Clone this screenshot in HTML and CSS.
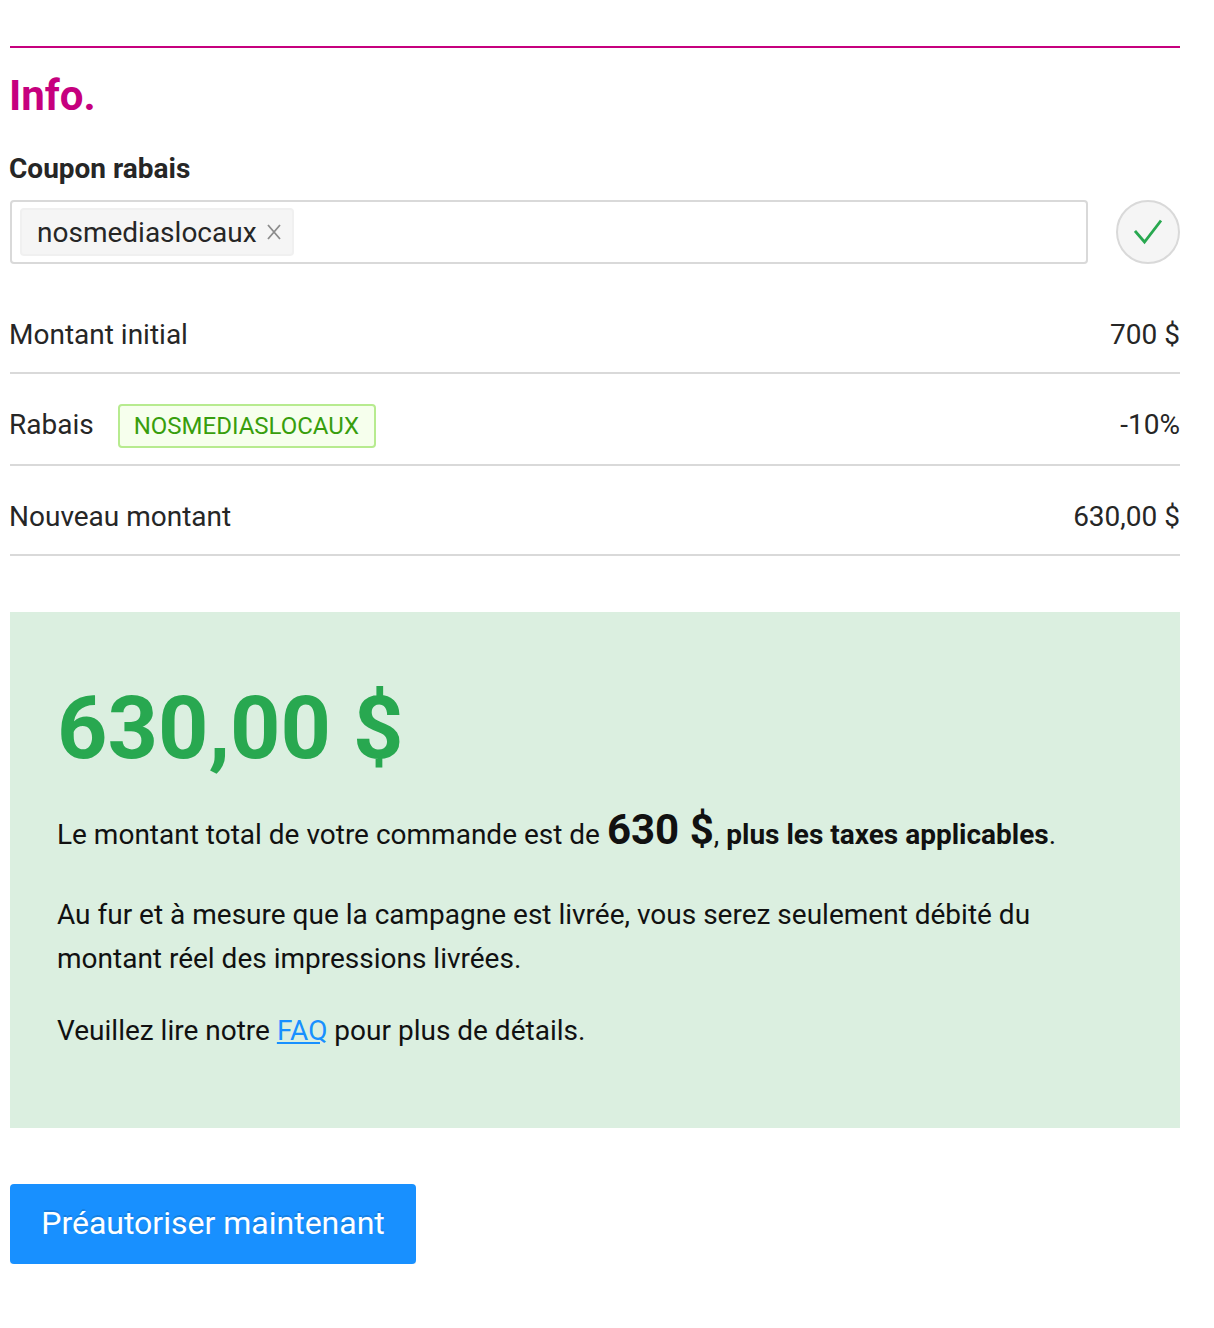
FILE: index.html
```
<!DOCTYPE html>
<html lang="fr">
<head>
    <meta charset="UTF-8">
    <meta name="viewport" content="width=device-width, initial-scale=1.0">
    <title>Info</title>
    <link rel="stylesheet" href="styles.css">
</head>
<body>
    <div class="container">
        <h2>Info.</h2>
        <div class="label">Coupon rabais</div>
        <div class="coupon">
            <div class="select">
                <span class="chip">nosmediaslocaux
                    <svg class="close" viewBox="0 0 14 16"><path d="M1 1L13 15M13 1L1 15"/></svg>
                </span>
            </div>
            <button class="check">
                <svg viewBox="0 0 28 26"><path d="M1 12L10.5 23L27 1.5"/></svg>
            </button>
        </div>

        <div class="row"><span>Montant initial</span><span>700 $</span></div>
        <div class="row row-discount">
            <div class="discount">Rabais <span class="tag">NOSMEDIASLOCAUX</span></div>
            <span>-10%</span>
        </div>
        <div class="row"><span>Nouveau montant</span><span>630,00 $</span></div>

        <div class="total">
            <div class="amount">630,00 $</div>
            <p class="summary">Le montant total de votre commande est de <strong class="big">630 $</strong>, <strong>plus les taxes applicables</strong>.</p>
            <p>Au fur et à mesure que la campagne est livrée, vous serez seulement débité du montant réel des impressions livrées.</p>
            <p>Veuillez lire notre <a href="#">FAQ</a> pour plus de détails.</p>
        </div>

        <button class="submit">Préautoriser maintenant</button>
    </div>
</body>
</html>
```

FILE: styles.css
```
* {
    box-sizing: border-box;
}

body {
    margin: 0;
    font-family: Roboto, sans-serif;
    font-size: 28px;
    line-height: 44px;
    color: #262626;
    background-color: white;
}

.container {
    width: 1170px;
    margin: 46px 0 0 10px;
    border-top: 2px solid #c6007e;
}

h2 {
    margin: 24px 0 27px;
    font-size: 42px;
    line-height: 48px;
    text-indent: -1px;
    color: #c6007e;
}

.label {
    font-weight: bold;
    text-indent: -1px;
    margin-bottom: 9px;
}

.coupon {
    display: flex;
    justify-content: space-between;
}

.select {
    width: 1078px;
    height: 64px;
    padding: 6px 8px;
    border: 2px solid #d9d9d9;
    border-radius: 4px;
}

.chip {
    display: flex;
    align-items: center;
    gap: 10px;
    width: 274px;
    height: 48px;
    padding: 2px 0 0 15px;
    border: 2px solid #f0f0f0;
    border-radius: 4px;
    background-color: #f5f5f5;
}

.close {
    width: 14px;
    height: 16px;
    margin-bottom: 2px;
    fill: none;
    stroke: #8c8c8c;
    stroke-width: 1.8;
}

.check {
    display: flex;
    align-items: center;
    justify-content: center;
    width: 64px;
    height: 64px;
    padding: 0;
    border: 2px solid #d9d9d9;
    border-radius: 50%;
    background-color: #f5f5f5;
}

.check svg {
    width: 28px;
    height: 26px;
    fill: none;
    stroke: #28a850;
    stroke-width: 2.8;
}

.row {
    display: flex;
    justify-content: space-between;
    align-items: flex-end;
    height: 90px;
    padding-bottom: 15px;
    border-bottom: 2px solid #d9d9d9;
    text-indent: -1px;
}

.coupon + .row {
    height: 110px;
}

.row-discount {
    height: 92px;
    padding-bottom: 17px;
}

.discount {
    display: flex;
    align-items: center;
}

.tag {
    height: 44px;
    margin: 1px 0 -1px 24px;
    padding: 0 15px 0 14px;
    border: 2px solid #b7eb8f;
    border-radius: 4px;
    font-size: 24px;
    line-height: 40px;
    text-indent: 0;
    color: #389e0d;
    background-color: #f6ffed;
}

.total {
    height: 516px;
    margin-top: 56px;
    padding: 63px 49px 0 47px;
    color: #111;
    background-color: #dbefe0;
}

.amount {
    font-size: 88px;
    font-weight: bold;
    line-height: 106px;
    color: #28a850;
}

p {
    margin: 0 0 28px;
}

.summary {
    margin: 27px 0 36px;
}

.big {
    font-size: 42px;
}

a {
    color: #1890ff;
}

.submit {
    display: block;
    width: 406px;
    height: 80px;
    margin-top: 56px;
    padding: 0 31px 2px;
    border: none;
    border-radius: 4px;
    font-family: inherit;
    font-size: 32px;
    white-space: nowrap;
    color: white;
    text-shadow: 0 -2px 0 rgba(0, 0, 0, 0.12);
    background-color: #1890ff;
    box-shadow: 0 4px 0 rgba(0, 0, 0, 0.045);
    cursor: pointer;
}
```
